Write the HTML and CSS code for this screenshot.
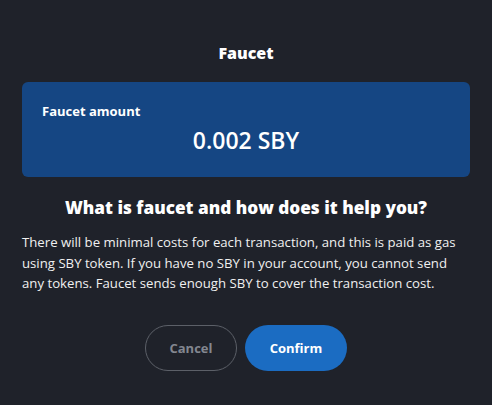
FILE: index.html
```html
<!DOCTYPE html>
<html>
<head>
<meta charset="utf-8">
<link rel="stylesheet" href="styles.css">
</head>
<body>
<div class="modal">
  <h1 class="title">Faucet</h1>
  <div class="card">
    <div class="card-label">Faucet amount</div>
    <div class="card-value">0.002 SBY</div>
  </div>
  <h2 class="question">What is faucet and how does it help you?</h2>
  <p class="desc">There will be minimal costs for each transaction, and this is paid as gas using SBY token. If you have no SBY in your account, you cannot send any tokens. Faucet sends enough SBY to cover the transaction cost.</p>
  <div class="actions">
    <button class="btn btn-cancel">Cancel</button>
    <button class="btn btn-confirm">Confirm</button>
  </div>
</div>
</body>
</html>
```
FILE: styles.css
```css
html, body {
  margin: 0;
  padding: 0;
  background: #1f222a;
  width: 492px;
  height: 405px;
  overflow: hidden;
}
body {
  font-family: "Open Sans", "Noto Sans", sans-serif;
  color: #ffffff;
}
.modal {
  display: flex;
  flex-direction: column;
  padding: 40px 22px 0 22px;
}
.title {
  margin: 0;
  font-size: 16px;
  font-weight: 800;
  text-align: center;
  line-height: 26px;
}
.card {
  margin-top: 16px;
  height: 95px;
  box-sizing: border-box;
  background: #154683;
  border-radius: 6px;
  padding: 20px 20px 0 20px;
  display: flex;
  flex-direction: column;
}
.card-label {
  font-size: 13px;
  font-weight: 700;
  line-height: 18px;
}
.card-value {
  font-size: 23px;
  font-weight: 600;
  text-align: center;
  line-height: 30px;
  margin-top: 5px;
}
.question {
  margin: 19px 0 0 0;
  font-size: 17.2px;
  font-weight: 800;
  text-align: center;
  line-height: 24px;
}
.desc {
  margin: 12px 0 0 0;
  font-size: 13.2px;
  line-height: 20.5px;
  color: #f0f0f0;
}
.actions {
  display: flex;
  justify-content: center;
  gap: 8px;
  margin-top: 31px;
}
.btn {
  height: 46px;
  border-radius: 23px;
  font-family: inherit;
  font-size: 13px;
  font-weight: 700;
  cursor: pointer;
}
.btn-cancel {
  width: 92px;
  background: transparent;
  border: 1px solid #5c6068;
  color: #838790;
}
.btn-confirm {
  width: 102px;
  background: #1b6cc2;
  border: none;
  color: #ffffff;
}
```
